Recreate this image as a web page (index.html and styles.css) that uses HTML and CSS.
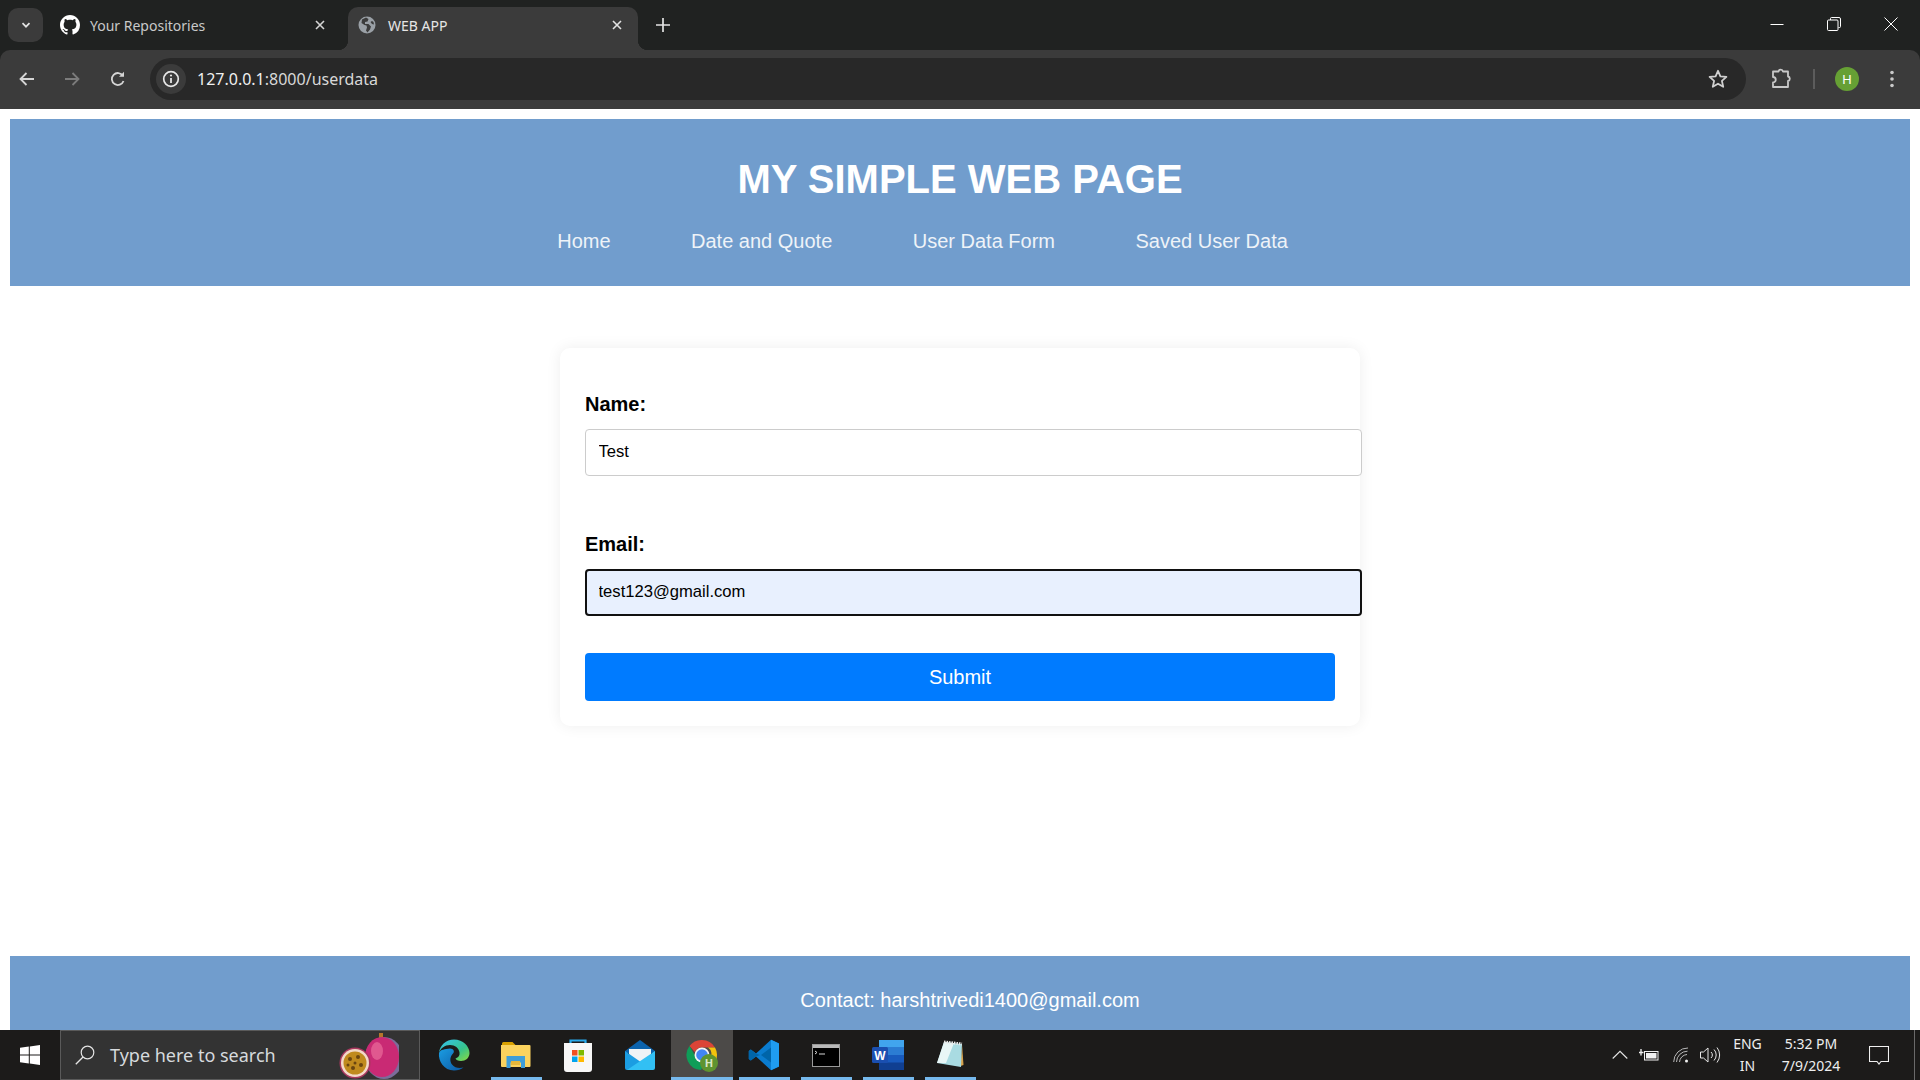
FILE: index.html
```html
<!DOCTYPE html>
<html lang="en">
<head>
<meta charset="utf-8">
<title>WEB APP</title>
<link rel="stylesheet" href="styles.css">
</head>
<body>
<div class="screen">
  <div class="tabstrip">
    <div class="tablist-btn"><svg width="12" height="12" viewBox="0 0 12 12"><path d="M2.5 4.2 6 7.7l3.5-3.5" fill="none" stroke="#e3e3e3" stroke-width="1.7"/></svg></div>
    <div class="tab">
      <svg class="tab-icon" width="20" height="20" viewBox="0 0 16 16"><path fill="#fff" d="M8 0C3.58 0 0 3.58 0 8c0 3.54 2.29 6.53 5.47 7.59.4.07.55-.17.55-.38 0-.19-.01-.82-.01-1.49-2.01.37-2.53-.49-2.69-.94-.09-.23-.48-.94-.82-1.13-.28-.15-.68-.52-.01-.53.63-.01 1.08.58 1.23.82.72 1.21 1.87.87 2.33.66.07-.52.28-.87.51-1.07-1.78-.2-3.64-.89-3.64-3.95 0-.87.31-1.59.82-2.15-.08-.2-.36-1.02.08-2.12 0 0 .67-.21 2.2.82.64-.18 1.32-.27 2-.27.68 0 1.36.09 2 .27 1.53-1.04 2.2-.82 2.2-.82.44 1.1.16 1.92.08 2.12.51.56.82 1.27.82 2.15 0 3.07-1.87 3.75-3.65 3.95.29.25.54.73.54 1.48 0 1.07-.01 1.93-.01 2.2 0 .21.15.46.55.38A8.013 8.013 0 0016 8c0-4.42-3.58-8-8-8z"/></svg>
      <span class="tab-title">Your Repositories</span>
      <svg class="tab-close" width="10" height="10" viewBox="0 0 10 10"><path d="M1 1l8 8M9 1l-8 8" stroke="#d5d5d5" stroke-width="1.6"/></svg>
    </div>
    <div class="tab tab-active">
      <svg class="tab-icon tab-globe" width="18" height="18" viewBox="0 0 18 18"><circle cx="9" cy="9" r="8.5" fill="#9aa0a6"/><path fill="#3c3c3c" d="M8 1.5 4 3.5 3.5 7l3 2 2 .5.5 2-1 3 1.5 2 2.5-3 1-3-2.5-2.5L7 8V6l2.500-.5 1-2.500zM14 5l-1.500 1 1.500 2 2 .5-.5-2.500z"/></svg>
      <span class="tab-title">WEB APP</span>
      <svg class="tab-close" width="10" height="10" viewBox="0 0 10 10"><path d="M1 1l8 8M9 1l-8 8" stroke="#e3e3e3" stroke-width="1.6"/></svg>
    </div>
    <svg class="new-tab" width="14" height="14" viewBox="0 0 14 14"><path d="M7 0v14M0 7h14" stroke="#e3e3e3" stroke-width="1.7"/></svg>
    <div class="window-controls">
      <svg width="14" height="14" viewBox="0 0 14 14"><path d="M.5 7.500h13" stroke="#fff" stroke-width="1"/></svg>
      <svg width="14" height="14" viewBox="0 0 14 14"><path d="M3.500 3V1.500a1 1 0 0 1 1-1h7.500a1.500 1.500 0 0 1 1.500 1.500v7.500a1 1 0 0 1-1 1H11.500" fill="none" stroke="#fff"/><rect x=".5" y="3" width="10.500" height="10.500" rx="1" fill="none" stroke="#fff"/></svg>
      <svg width="14" height="14" viewBox="0 0 14 14"><path d="M.5.5l13 13M13.500.5l-13 13" stroke="#fff" stroke-width="1"/></svg>
    </div>
  </div>

  <div class="toolbar">
    <svg class="tool back" width="18" height="18" viewBox="0 0 18 18"><path d="M16 9H3M8.500 3 2.500 9l6 6" fill="none" stroke="#d5d5d5" stroke-width="1.800"/></svg>
    <svg class="tool forward" width="18" height="18" viewBox="0 0 18 18"><path d="M2 9h13M9.500 3l6 6-6 6" fill="none" stroke="#7c7c7c" stroke-width="1.800"/></svg>
    <svg class="tool reload" width="18" height="18" viewBox="0 0 18 18"><path d="M14.500 11a6 6 0 1 1-.6-5.200" fill="none" stroke="#d5d5d5" stroke-width="1.800"/><path d="M15 1.800v5h-5z" fill="#d5d5d5"/></svg>
    <div class="omnibox">
      <div class="site-chip"><svg width="18" height="18" viewBox="0 0 18 18"><circle cx="9" cy="9" r="7.300" fill="none" stroke="#e6e6e6" stroke-width="1.700"/><path d="M9 8v5" stroke="#e6e6e6" stroke-width="1.800"/><circle cx="9" cy="5.500" r="1.100" fill="#e6e6e6"/></svg></div>
      <div class="url"><span class="url-host">127.0.0.1</span><span class="url-path">:8000/userdata</span></div>
      <svg class="star" width="20" height="20" viewBox="0 0 20 20"><path d="M10 1.800l2.400 5.500 6 .6-4.500 4 1.300 5.900L10 14.700l-5.200 3.100 1.300-5.900-4.500-4 6-.6z" fill="none" stroke="#d0d0d0" stroke-width="1.800" stroke-linejoin="round"/></svg>
    </div>
    <svg class="puzzle" width="22" height="22" viewBox="0 0 22 22"><path d="M3 3.500h5.500a2.300 2.300 0 0 1 4.500 0H18v5a2.300 2.300 0 0 1 0 4.500v6H3v-4.500a2.700 2.700 0 0 0 0-5.500z" fill="none" stroke="#c9c9c9" stroke-width="1.800" stroke-linejoin="round"/></svg>
    <div class="tool-sep"></div>
    <div class="avatar">H</div>
    <svg class="kebab" width="4" height="18" viewBox="0 0 4 18"><circle cx="2" cy="2.500" r="1.800" fill="#c9c9c9"/><circle cx="2" cy="9" r="1.800" fill="#c9c9c9"/><circle cx="2" cy="15.500" r="1.800" fill="#c9c9c9"/></svg>
  </div>

  <div class="page">
    <header class="site-header">
      <h1 class="site-title">MY SIMPLE WEB PAGE</h1>
      <nav class="site-nav">
        <a class="nav-link">Home</a>
        <a class="nav-link">Date and Quote</a>
        <a class="nav-link">User Data Form</a>
        <a class="nav-link">Saved User Data</a>
      </nav>
    </header>
    <main class="content">
      <form class="card">
        <div class="field">
          <label class="field-label">Name:</label>
          <input class="field-input" type="text" value="Test">
        </div>
        <div class="field">
          <label class="field-label">Email:</label>
          <input class="field-input field-input-focus" type="email" value="test123@gmail.com">
        </div>
        <button class="submit" type="button">Submit</button>
      </form>
    </main>
    <footer class="site-footer">Contact: harshtrivedi1400@gmail.com</footer>
  </div>

  <div class="taskbar">
    <div class="start"><svg width="20" height="20" viewBox="0 0 20 20"><path fill="#fff" d="M0 2.800 8.800 1.500v8H0zM9.800 1.400 20 0v9.500H9.800zM0 10.500h8.800v8L0 17.200zM9.800 10.500H20V20L9.800 18.600z"/></svg></div>
    <div class="search">
      <svg class="search-icon" width="20" height="20" viewBox="0 0 20 20"><circle cx="12.500" cy="7.500" r="6.300" fill="none" stroke="#e6e6e6" stroke-width="1.200"/><path d="M8 12 .8 19.300" stroke="#e6e6e6" stroke-width="1.300"/></svg>
      <span class="search-text">Type here to search</span>
      <svg class="search-art" width="60" height="46" viewBox="0 0 60 46">
        <path d="M40 0h4v8h-4z" fill="#b5762b"/>
        <ellipse cx="45" cy="25" rx="19" ry="21" fill="#7c6c9a"/>
        <ellipse cx="43" cy="24" rx="17" ry="20" fill="#c92a74"/>
        <ellipse cx="38" cy="18" rx="6" ry="9" fill="#e0588f"/>
        <circle cx="16" cy="30" r="15.500" fill="#a8385f"/>
        <circle cx="16" cy="30" r="14" fill="#f3d9c8"/>
        <circle cx="16" cy="30" r="11.500" fill="#c08a1e"/>
        <g fill="#6a4510"><circle cx="11" cy="26" r="2"/><circle cx="19" cy="24" r="2"/><circle cx="22" cy="32" r="2"/><circle cx="14" cy="35" r="2"/><circle cx="9" cy="32" r="1.500"/><circle cx="16" cy="30" r="1.500"/></g>
      </svg>
    </div>
    <div class="apps">
      <div class="app"><svg width="32" height="32" viewBox="0 0 32 32"><defs><linearGradient id="edgeA" x1="0" y1="0" x2="1" y2="1"><stop offset="0" stop-color="#35c1f1"/><stop offset=".6" stop-color="#36c38c"/><stop offset="1" stop-color="#8ddb3f"/></linearGradient><linearGradient id="edgeB" x1="0" y1="0" x2="1" y2="1"><stop offset="0" stop-color="#1b9de2"/><stop offset="1" stop-color="#0c59a4"/></linearGradient></defs><path fill="url(#edgeA)" d="M1 14C2 6 8 .5 16 .5c9 0 15.500 7 15.500 13.500 0 5-4 8-8.500 8-3 0-5-1-5.500-2.500 3-1 4.500-3 4-6C21 9 17 6 12 6 7 6 2.500 9 1 14z"/><path fill="url(#edgeB)" d="M1 14c-1 8 5 17.500 15 17.500 4 0 7-1 9.500-3-4 1-9 .5-11.500-3-2.500-3.500-2-8 1-11 2-2 .5-5-3-5C7 10.500 2.500 10 1 14z"/></svg></div>
      <div class="app app-open"><svg width="30" height="26" viewBox="0 0 30 26"><path fill="#d9a100" d="M1 1.500a1.500 1.500 0 0 1 1.500-1.500h9l3 3H1z"/><path fill="#fbd35e" d="M0 3h28.500a1 1 0 0 1 1 1v20a1 1 0 0 1-1 1H1a1 1 0 0 1-1-1z"/><path fill="#3f9ed8" d="M5.500 14h18.500v12h-4v-5.500h-10.500V26h-4z"/><path fill="#e6b83b" d="M10 19h9v4h-9z"/></svg></div>
      <div class="app"><svg width="30" height="34" viewBox="0 0 30 34"><path d="M7.500 8V2.500h15V8" fill="none" stroke="#28a8ea" stroke-width="2.200"/><path fill="#f7f7f7" d="M1 5h28v26a3 3 0 0 1-3 3H4a3 3 0 0 1-3-3z"/><path fill="#f25022" d="M9 12h5.500v5.500H9z"/><path fill="#7fba00" d="M15.500 12H21v5.500h-5.500z"/><path fill="#00a4ef" d="M9 18.500h5.500V24H9z"/><path fill="#ffb900" d="M15.500 18.500H21V24h-5.500z"/></svg></div>
      <div class="app"><svg width="32" height="32" viewBox="0 0 32 32"><path fill="#0b63ad" d="M16 1 31 12v2H1v-2z"/><path fill="#eef3f6" d="M5 10h22v6l-11 8L5 16z"/><path fill="#1b9de2" d="M1 12l15 10.500V31H3a2 2 0 0 1-2-2z"/><path fill="#32c0f4" d="M31 12v17a2 2 0 0 1-2 2H3l28-19z"/></svg></div>
      <div class="app app-active"><svg width="32" height="32" viewBox="0 0 32 32"><path fill="#db4437" d="M16 1a15 15 0 0 1 13 7.500H16a7.500 7.500 0 0 0-7 4.800L3.500 7A15 15 0 0 1 16 1z"/><path fill="#f4c20d" d="M29 8.500A15 15 0 0 1 17 31l6.500-11.200A7.500 7.500 0 0 0 22 8.500z"/><path fill="#0f9d58" d="M3.500 7 10 18.500a7.500 7.500 0 0 0 9 4.500L15 31A15 15 0 0 1 3.500 7z"/><circle cx="16" cy="16" r="7.500" fill="#f5f5f5"/><circle cx="16" cy="16" r="5.800" fill="#4285f4"/></svg><span class="chrome-badge">H</span></div>
      <div class="app app-open"><svg width="32" height="32" viewBox="0 0 32 32"><path fill="#0a7ccf" d="M23 .8 31 4.600v22.800L23 31.200 8 17.500 2.800 21.500.8 20V12l2-1.500L8 14.500z"/><path fill="#0065a9" d="M23 8.500 13 16l10 7.500zM8 14.500l4 1.500-4 1.500-5.200 4L.8 20v-8l2-1.500z"/><path fill="#1f9cf0" d="M23 .8 31 4.600v22.800l-8 3.800z"/></svg></div>
      <div class="app app-open"><svg width="28" height="23" viewBox="0 0 28 23"><rect x=".5" y=".5" width="27" height="22" fill="#000" stroke="#9a9a9a"/><rect x="1" y="1" width="26" height="3" fill="#b9b9b9"/><path d="M3 7l2 1.500L3 10M7 10h6" stroke="#d8d8d8" fill="none"/></svg></div>
      <div class="app app-open"><svg width="32" height="30" viewBox="0 0 32 30"><rect x="7" y="0" width="25" height="30" rx="1.500" fill="#185abd"/><path fill="#41a5ee" d="M7 0h25v7.500H7z"/><path fill="#2b7cd3" d="M7 7.500h25V15H7z"/><path fill="#103f91" d="M7 22.500h25V30H7z"/><rect x="0" y="7" width="16" height="16" rx="1.500" fill="#1a4fb0"/><text class="word-w" x="8" y="20">W</text></svg></div>
      <div class="app app-open"><svg width="28" height="32" viewBox="0 0 28 32"><path fill="#d7a24a" d="M26 5l1.500 21-3 1z"/><path fill="#a9dbe2" d="M8 3l18 2-1 23L1 24z"/><path fill="#e8f6f6" d="M8 3l10 1-8 20H1z"/><path d="M8 3l18 2" stroke="#e9e9e9" stroke-width="3" stroke-dasharray="1.500 1"/></svg></div>
    </div>
    <div class="tray">
      <svg class="tray-chevron" width="16" height="10" viewBox="0 0 16 10"><path d="M.7 8.500 8 1.300l7.300 7.200" fill="none" stroke="#e6e6e6" stroke-width="1.100"/></svg>
      <svg class="tray-battery" width="20" height="12" viewBox="0 0 20 12"><rect x="5.500" y="2.500" width="13.500" height="8.500" fill="none" stroke="#f0f0f0"/><rect x="7" y="4" width="10.500" height="5.500" fill="#f0f0f0"/><path d="M0 3.500h4.500M2 0v6.500" stroke="#f0f0f0" stroke-width="1.300"/></svg>
      <svg class="tray-wifi" width="16" height="16" viewBox="0 0 16 16"><g fill="none" stroke="#b9b9b9"><path d="M.7 15A14 14 0 0 1 15 1"/><path d="M3.500 15A11 11 0 0 1 14.500 4.200"/><path d="M6.500 15a8 8 0 0 1 7.500-7.500"/></g><circle cx="13.500" cy="14" r="1.500" fill="#f0f0f0"/></svg>
      <svg class="tray-volume" width="21" height="16" viewBox="0 0 21 16"><g fill="none" stroke="#e6e6e6"><path d="M.5 5h3l4.500-4v14L3.500 11h-3z"/><path d="M11 5a4 4 0 0 1 0 6"/><path d="M14 2.500a8 8 0 0 1 0 11"/><path d="M17 .5a12 12 0 0 1 0 15"/></g></svg>
      <div class="tray-lang"><span>ENG</span><span>IN</span></div>
      <div class="tray-clock"><span>5:32 PM</span><span>7/9/2024</span></div>
      <svg class="tray-notify" width="20" height="19" viewBox="0 0 20 19"><path d="M.5.500h19v15H12l-2 2.500-2-2.500H.5z" fill="none" stroke="#f0f0f0" stroke-width="1.100"/></svg>
      <div class="show-desktop"></div>
    </div>
  </div>
</div>
</body>
</html>
```

FILE: styles.css
```css
* { box-sizing: border-box; }
html, body { margin: 0; height: 100%; overflow: hidden; }
.screen { display: flex; flex-direction: column; height: 1080px; width: 1920px; background: #202221; overflow: hidden; font-family: "Liberation Sans", Arial, sans-serif; }

/* tab strip */
.tabstrip { flex: 0 0 50px; background: #202221; display: flex; align-items: flex-end; padding-left: 8px; font-family: "Noto Sans", "Open Sans", sans-serif; }
.tablist-btn { width: 35px; height: 34px; margin-bottom: 8px; border-radius: 10px; background: #3b3b3b; display: flex; align-items: center; justify-content: center; }
.tab { position: relative; width: 290px; height: 43px; margin-left: 8px; padding: 0 0 7px 9px; display: flex; align-items: center; border-radius: 10px 10px 0 0; color: #c9c9c9; }
.tab + .tab { margin-left: 7px; }
.tab-active { background: #3b3b3b; color: #e6e6e6; }
.tab-active::before, .tab-active::after { content: ""; position: absolute; bottom: 0; width: 10px; height: 10px; }
.tab-active::before { left: -10px; background: radial-gradient(circle at 0 0, transparent 10px, #3b3b3b 10.5px); }
.tab-active::after { right: -10px; background: radial-gradient(circle at 100% 0, transparent 10px, #3b3b3b 10.5px); }
.tab-icon { flex: none; }
.tab-globe { margin-left: 1px; }
.tab-title { margin-left: 10px; font-size: 14px; white-space: nowrap; flex: 1; }
.tab-active .tab-title { margin-left: 12px; }
.tab-close { flex: none; margin-right: 16px; }
.new-tab { flex: none; margin: 0 0 18px 18px; }
.window-controls { margin-left: auto; height: 50px; display: flex; align-items: center; gap: 43px; padding: 0 22px 2px 0; }

/* toolbar */
.toolbar { flex: 0 0 59px; background: #3b3b3b; display: flex; align-items: center; padding: 0 0 1px 18px; border-radius: 10px 10px 0 0; color: #fff; }
.tool { flex: none; }
.forward { margin-left: 27px; }
.reload { margin-left: 28px; }
.omnibox { flex: none; width: 1596px; height: 42px; margin-left: 23px; background: #282828; border-radius: 21px; display: flex; align-items: center; padding: 0 18px 0 6px; }
.site-chip { width: 30px; height: 30px; border-radius: 50%; background: #3b3b3b; display: flex; align-items: center; justify-content: center; }
.url { margin-left: 11px; font-family: "Noto Sans", "Open Sans", sans-serif; font-size: 16px; flex: 1; }
.url-host { color: #f0f0f0; }
.url-path { color: #d8d8d8; }
.star { flex: none; }
.puzzle { flex: none; margin-left: 24px; }
.tool-sep { width: 2px; height: 20px; background: #5c5c5c; margin-left: 21px; }
.avatar { width: 24px; height: 24px; margin-left: 20px; border-radius: 50%; background: #66a034; color: #fff; font-size: 13px; display: flex; align-items: center; justify-content: center; }
.kebab { flex: none; margin-left: 31px; }

/* page */
.page { flex: 0 0 921px; padding: 10px 10px 0; background: #fff; display: flex; flex-direction: column; overflow: hidden; }
.site-header { flex: none; background: #719dcd; color: #fff; padding: 37px 0 33px; text-align: center; }
.site-title { margin: 0 0 28px; font-size: 40px; line-height: 46px; font-weight: 700; }
.site-nav { display: flex; justify-content: center; gap: 80.5px; padding-right: 75px; font-size: 20px; line-height: 23px; }
.nav-link { color: #eef3f8; }
.content { flex: none; height: 670px; display: flex; justify-content: center; align-items: flex-start; padding-top: 62px; }
.card { width: 800px; padding: 45px 25px 25px; background: #fff; border-radius: 10px; box-shadow: 0 0 15px rgba(0,0,0,.07); }
.field { margin-bottom: 57px; }
.field + .field { margin-bottom: 37px; }
.field-label { display: block; margin-bottom: 13px; font-size: 20px; line-height: 23px; font-weight: 700; color: #000; }
.field-input { display: block; width: 777px; height: 47px; padding: 0 12.5px 2px; border: 1px solid #ccc; border-radius: 4px; background: #fff; font-family: "Liberation Sans", Arial, sans-serif; font-size: 16.6px; color: #000; outline: none; }
.field-input-focus { border: 2px solid #111; padding: 0 11.5px 2px; background: #e8f0fe; }
.submit { display: block; width: 750px; height: 48px; border: 0; border-radius: 4px; background: #007bff; color: #fff; font-family: "Liberation Sans", Arial, sans-serif; font-size: 20px; }
.site-footer { flex: none; height: 88px; background: #719dcd; color: #fff; text-align: center; font-size: 20px; line-height: 23px; padding: 33px 0 0 20px; }

/* taskbar */
.taskbar { flex: 0 0 50px; display: flex; background: #1c1b1a; color: #eee; font-family: "Noto Sans", "Open Sans", sans-serif; }
.start { flex: none; width: 60px; display: flex; align-items: center; justify-content: center; }
.search { flex: none; width: 360px; background: #333; border: 1px solid #5a5a5a; display: flex; align-items: center; padding-left: 14px; position: relative; }
.search-icon { flex: none; }
.search-text { margin-left: 15px; font-size: 18px; color: #d6dadd; white-space: nowrap; }
.search-art { position: absolute; left: 278px; top: 2px; }
.apps { display: flex; margin-left: 3px; }
.app { position: relative; width: 62px; height: 50px; display: flex; align-items: center; justify-content: center; }
.app-open::after { content: ""; position: absolute; left: 5.5px; right: 5.5px; bottom: 0; height: 3px; background: #76b9ed; }
.app-active { background: #4c4a48; }
.app-active::after { content: ""; position: absolute; left: 0; right: 0; bottom: 0; height: 3px; background: #76b9ed; }
.chrome-badge { position: absolute; left: 29px; top: 24px; width: 18px; height: 18px; border-radius: 50%; background: #5f9430; color: #d8e8c8; font-size: 11px; font-weight: 700; line-height: 18px; text-align: center; }
.word-w { fill: #fff; font-family: "Liberation Sans", sans-serif; font-size: 12px; font-weight: 700; text-anchor: middle; }
.tray { margin-left: auto; display: flex; align-items: center; position: relative; }
.tray-chevron { flex: none; }
.tray-battery { flex: none; margin-left: 11px; }
.tray-wifi { flex: none; margin-left: 14px; }
.tray-volume { flex: none; margin-left: 11px; }
.tray-lang { margin-left: 11.5px; width: 30px; display: flex; flex-direction: column; align-items: center; gap: 4px; font-size: 14px; line-height: 18px; }
.tray-clock { margin-left: 15.5px; width: 66px; display: flex; flex-direction: column; align-items: center; gap: 4px; font-size: 14px; line-height: 18px; white-space: nowrap; }
.tray-notify { flex: none; margin-left: 25px; }
.show-desktop { width: 1px; height: 50px; background: #6a6a6a; margin-left: 25px; margin-right: 5px; }
```
